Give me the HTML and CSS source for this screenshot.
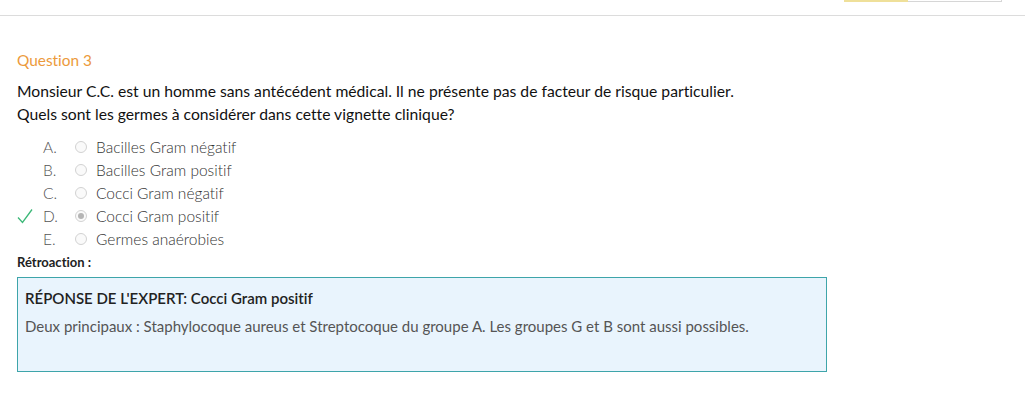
FILE: index.html
```html
<!DOCTYPE html>
<html lang="fr">
<head>
<meta charset="utf-8">
<link rel="stylesheet" href="styles.css">
</head>
<body>
<header class="topbar">
  <div class="progress">
    <div class="progress-fill"></div>
    <div class="progress-rest"></div>
  </div>
</header>
<main class="question">
  <h2 class="q-title">Question 3</h2>
  <p class="q-text">Monsieur C.C. est un homme sans antécédent médical. Il ne présente pas de facteur de risque particulier.<br>Quels sont les germes à considérer dans cette vignette clinique?</p>
  <ul class="options">
    <li class="option"><span class="mark"></span><span class="letter">A.</span><span class="radio"></span><span class="label">Bacilles Gram négatif</span></li>
    <li class="option"><span class="mark"></span><span class="letter">B.</span><span class="radio"></span><span class="label">Bacilles Gram positif</span></li>
    <li class="option"><span class="mark"></span><span class="letter">C.</span><span class="radio"></span><span class="label">Cocci Gram négatif</span></li>
    <li class="option"><span class="mark"><svg width="16" height="16" viewBox="0 0 16 16"><path d="M1 9.5 L5.5 14.5 L15 1.5" fill="none" stroke="#3cb878" stroke-width="1.3"/></svg></span><span class="letter">D.</span><span class="radio checked"></span><span class="label">Cocci Gram positif</span></li>
    <li class="option"><span class="mark"></span><span class="letter">E.</span><span class="radio"></span><span class="label">Germes anaérobies</span></li>
  </ul>
  <div class="feedback-label">Rétroaction :</div>
  <div class="feedback">
    <div class="fb-title">RÉPONSE DE L'EXPERT: Cocci Gram positif</div>
    <div class="fb-text">Deux principaux : Staphylocoque aureus et Streptocoque du groupe A. Les groupes G et B sont aussi possibles.</div>
  </div>
</main>
</body>
</html>
```
FILE: styles.css
```css
html, body {
  margin: 0;
  padding: 0;
  background: #fff;
}
body {
  font-family: Lato, "Open Sans", sans-serif;
  font-variant-ligatures: none;
  color: #222;
}
.topbar {
  height: 15px;
  border-bottom: 1px solid #dcdcdc;
  display: flex;
  justify-content: flex-end;
  align-items: flex-start;
  padding-right: 23px;
}
.progress {
  display: flex;
  height: 2px;
}
.progress-fill {
  width: 64px;
  background: #efe09a;
}
.progress-rest {
  width: 94px;
  border-bottom: 1px solid #d6d6d6;
  border-right: 1px solid #d6d6d6;
  box-sizing: border-box;
}
.question {
  padding: 0 16px 0 17px;
}
.q-title {
  margin: 34px 0 0;
  font-size: 15.4px;
  font-weight: 400;
  color: #ec9a3c;
  line-height: 20px;
}
.q-text {
  margin: 10px 0 0;
  font-size: 15.7px;
  line-height: 23px;
  color: #111;
}
.options {
  list-style: none;
  margin: 9px 0 0;
  padding: 0;
}
.option {
  display: flex;
  align-items: center;
  height: 23px;
  font-size: 15.5px;
  font-weight: 300;
  color: #333;
}
.mark {
  width: 26px;
  display: flex;
  align-items: center;
}
.letter {
  width: 32px;
  color: #555;
}
.radio {
  width: 12px;
  height: 12px;
  border: 1px solid #d2d2d2;
  border-radius: 50%;
  box-sizing: border-box;
  margin-right: 9px;
  position: relative;
  background: #fafafa;
}
.radio.checked::after {
  content: "";
  position: absolute;
  left: 2px;
  top: 2px;
  width: 6px;
  height: 6px;
  border-radius: 50%;
  background: #b5b5b5;
}
.feedback-label {
  font-size: 13px;
  font-weight: 700;
  color: #222;
  margin-top: 3px;
  line-height: 18px;
}
.feedback {
  margin-top: 6px;
  width: 810px;
  height: 95px;
  box-sizing: border-box;
  border: 1px solid #3ea5aa;
  background: #e9f4fd;
  padding: 10px 7px;
}
.fb-title {
  font-size: 15px;
  font-weight: 600;
  color: #222;
  line-height: 20px;
}
.fb-text {
  margin-top: 8px;
  font-size: 15px;
  color: #555;
  line-height: 20px;
}
```
